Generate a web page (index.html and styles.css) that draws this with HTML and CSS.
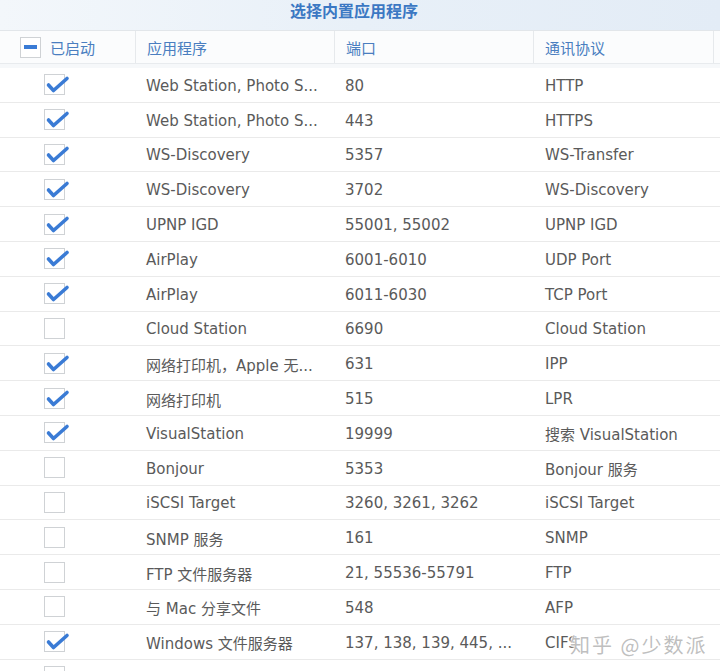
FILE: index.html
```html
<!DOCTYPE html>
<html lang="zh">
<head>
<meta charset="utf-8">
<link rel="stylesheet" href="styles.css">
</head>
<body>
<div class="titlebar"><span class="title">选择内置应用程序</span></div>
<div class="table">
  <div class="head">
    <div class="hc c1"><span class="cb minus"><span class="bar"></span></span><span>已启动</span></div>
    <div class="hc c2">应用程序</div>
    <div class="hc c3">端口</div>
    <div class="hc c4">通讯协议</div>
    <div class="hc c5"></div>
  </div>
  <div class="gap"></div>
  <div class="rows" id="rows"></div>
</div>
<div class="watermark">知乎 @少数派</div>
<script src="app.js"></script>
</body>
</html>
```

FILE: app.js
```js
const data = [
  [1, "Web Station, Photo S...", "80", "HTTP"],
  [1, "Web Station, Photo S...", "443", "HTTPS"],
  [1, "WS-Discovery", "5357", "WS-Transfer"],
  [1, "WS-Discovery", "3702", "WS-Discovery"],
  [1, "UPNP IGD", "55001, 55002", "UPNP IGD"],
  [1, "AirPlay", "6001-6010", "UDP Port"],
  [1, "AirPlay", "6011-6030", "TCP Port"],
  [0, "Cloud Station", "6690", "Cloud Station"],
  [1, "网络打印机，Apple 无...", "631", "IPP"],
  [1, "网络打印机", "515", "LPR"],
  [1, "VisualStation", "19999", "搜索 VisualStation"],
  [0, "Bonjour", "5353", "Bonjour 服务"],
  [0, "iSCSI Target", "3260, 3261, 3262", "iSCSI Target"],
  [0, "SNMP 服务", "161", "SNMP"],
  [0, "FTP 文件服务器", "21, 55536-55791", "FTP"],
  [0, "与 Mac 分享文件", "548", "AFP"],
  [1, "Windows 文件服务器", "137, 138, 139, 445, ...", "CIFS"],
  [0, "", "", ""]
];
const check = '<svg class="ck" viewBox="0 0 21 21" width="21" height="21"><polyline points="3.5,10 8.5,15.5 22,3.5" fill="none" stroke="#3a7bd5" stroke-width="3.6" stroke-linecap="round" stroke-linejoin="round"/></svg>';
const rows = document.getElementById('rows');
rows.innerHTML = data.map(r =>
  '<div class="row"><div class="c c1"><span class="cb">' + (r[0] ? check : '') +
  '</span></div><div class="c c2">' + r[1] + '</div><div class="c c3">' + r[2] +
  '</div><div class="c c4">' + r[3] + '</div><div class="c c5"></div></div>'
).join('');
```

FILE: styles.css
```css
html, body { margin: 0; padding: 0; background: #fff; }
body {
  width: 720px; height: 671px; overflow: hidden; position: relative;
  font-family: "DejaVu Sans", "Noto Sans CJK SC", sans-serif;
}
.titlebar {
  height: 30px;
  background: linear-gradient(to right, #f3f7fb 0%, #e8f0f8 50%, #e3ecf6 100%);
  display: flex; justify-content: center; align-items: flex-start;
  padding-right: 12px; padding-top: 1px; box-sizing: border-box;
}
.title {
  font-family: "Noto Sans CJK SC", sans-serif;
  font-size: 16px; font-weight: 700; color: #3b78c3; line-height: 18px;
}
.table { width: 720px; }
.head {
  display: flex; height: 34px; box-sizing: border-box;
  border-top: 1px solid #e2e6ea; border-bottom: 1px solid #e8ebee;
  background: #fbfcfd;
}
.hc {
  display: flex; align-items: center; box-sizing: border-box; flex: none;
  font-family: "Noto Sans CJK SC", sans-serif; font-size: 15px; color: #4a7ec0;
  border-right: 1px solid #e6e9ec; padding-left: 11px;
}
.c1 { width: 136px; }
.c2 { width: 199px; }
.c3 { width: 199px; }
.c4 { width: 180px; }
.c5 { width: 6px; }
.hc.c5 { border-right: none; }
.head .c1 { padding-left: 20px; gap: 9px; }
.gap { height: 4px; background: #f6f8fa; }
.row { display: flex; height: 34.8px; box-sizing: border-box; border-bottom: 1px solid #eaeaea; }
.c {
  display: flex; align-items: center; box-sizing: border-box; padding-left: 10px; padding-top: 2px; flex: none;
  font-size: 15px; color: #5a5a5a; white-space: nowrap; overflow: hidden;
  font-family: "DejaVu Sans", "Noto Sans CJK SC", sans-serif;
}
.row .c1 { padding-left: 44px; padding-top: 0; overflow: visible; }
.row .c4 { padding-left: 11px; }
.cb {
  width: 21px; height: 21px; box-sizing: border-box; border: 1px solid #cfd2d5;
  background: #fff; display: inline-flex; align-items: center; justify-content: center;
  flex: none; position: relative;
}
.ck { position: absolute; left: 0; top: 0; overflow: visible; }
.minus .bar { width: 13px; height: 4px; background: #3a7bd5; }
.watermark {
  position: absolute; left: 570px; top: 630px;
  font-family: "Noto Sans CJK SC", sans-serif; font-size: 20px; color: rgba(185,185,185,0.92);
  text-shadow: 0 0 2px #fff, 0 0 2px #fff, 0 0 3px #fff;
  letter-spacing: 2px;
}
```
